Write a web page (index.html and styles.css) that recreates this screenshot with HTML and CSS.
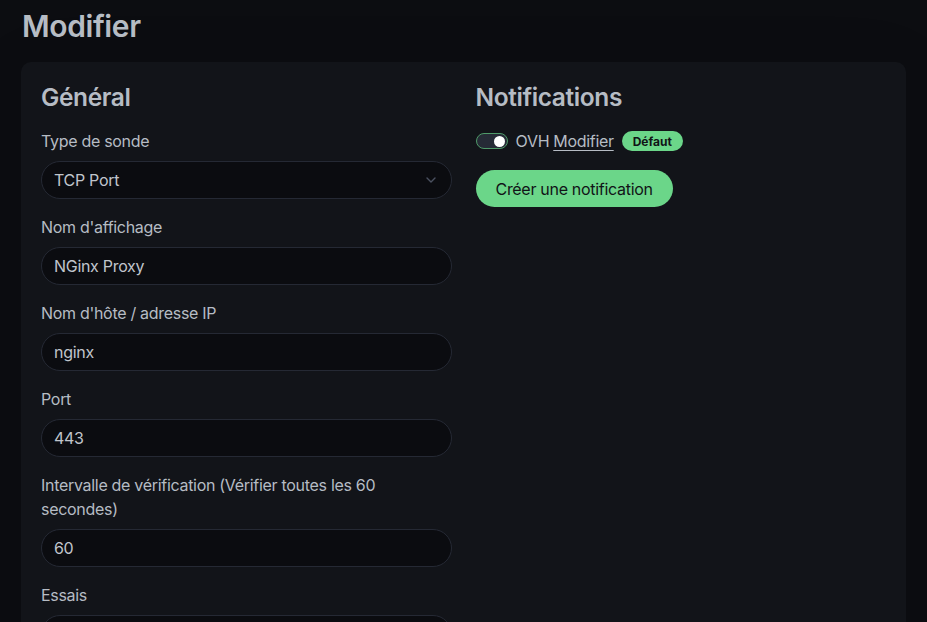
FILE: index.html
```html
<!DOCTYPE html>
<html lang="fr">
<head>
<meta charset="utf-8">
<title>Modifier</title>
<link rel="stylesheet" href="styles.css">
</head>
<body>
<main class="page">
  <h1 class="page-title">Modifier</h1>
  <section class="card">
    <div class="columns">
      <div class="col">
        <h2 class="section-title">Général</h2>
        <div class="field">
          <label class="label">Type de sonde</label>
          <div class="control select">
            <span>TCP Port</span>
            <svg class="chevron" width="10" height="6" viewBox="0 0 10 6"><path d="M1 1l4 4 4-4" fill="none" stroke="#4b5160" stroke-width="1.4" stroke-linecap="round" stroke-linejoin="round"/></svg>
          </div>
        </div>
        <div class="field">
          <label class="label">Nom d'affichage</label>
          <div class="control">NGinx Proxy</div>
        </div>
        <div class="field">
          <label class="label">Nom d'hôte / adresse IP</label>
          <div class="control">nginx</div>
        </div>
        <div class="field">
          <label class="label">Port</label>
          <div class="control">443</div>
        </div>
        <div class="field">
          <label class="label">Intervalle de vérification (Vérifier toutes les 60 secondes)</label>
          <div class="control">60</div>
        </div>
        <div class="field">
          <label class="label">Essais</label>
          <div class="control"></div>
        </div>
      </div>
      <div class="col">
        <h2 class="section-title">Notifications</h2>
        <div class="notif-row">
          <span class="switch"><span class="knob"></span></span>
          <span class="notif-name">OVH</span>
          <a class="notif-edit" href="#">Modifier</a>
          <span class="badge">Défaut</span>
        </div>
        <button class="btn">Créer une notification</button>
      </div>
    </div>
  </section>
</main>
</body>
</html>
```
FILE: styles.css
```css
* { box-sizing: border-box; }
html, body { margin: 0; height: 100%; }
body {
  background: #0c0d11;
  color: #b6bcc4;
  font-family: Inter, "Noto Sans", "Liberation Sans", sans-serif;
  font-size: 16px;
  letter-spacing: -0.3px;
  overflow: hidden;
}
.page {
  padding: 6px 21px 0 21px;
}
.page-title {
  margin: 0 0 16px 1px;
  font-size: 30px;
  line-height: 40px;
  font-weight: 600;
  color: #b6bcc4;
  letter-spacing: -0.4px;
}
.card {
  background: #121419;
  border-radius: 10px;
  padding: 20px 20px 40px 20px;
  min-height: 700px;
  box-shadow: 0 15px 70px rgba(0,0,0,0.1);
}
.columns {
  display: grid;
  grid-template-columns: 1fr 1fr;
  column-gap: 24px;
}
.section-title {
  margin: 0;
  font-size: 24.5px;
  line-height: 31px;
  font-weight: 600;
  color: #b6bcc4;
  letter-spacing: -0.4px;
}
.field {
  margin-top: 16px;
  display: flex;
  flex-direction: column;
}
.label {
  font-size: 16px;
  line-height: 24px;
  margin-bottom: 8px;
}
.control {
  height: 38px;
  border: 1px solid #252934;
  border-radius: 19px;
  background: #0b0c10;
  padding: 0 12px;
  display: flex;
  align-items: center;
  font-size: 16px;
  color: #c0c5cc;
}
.select { justify-content: space-between; padding-right: 15px; }
.notif-row {
  margin-top: 16px;
  height: 24px;
  display: flex;
  align-items: center;
  font-size: 16px;
}
.switch {
  width: 32px;
  height: 16px;
  border: 1px solid #4f9a69;
  border-radius: 8px;
  background: #262b36;
  display: flex;
  align-items: center;
  justify-content: flex-end;
  padding: 0 2px;
  margin-right: 8px;
}
.knob {
  width: 11px;
  height: 11px;
  border-radius: 50%;
  background: #ffffff;
}
.notif-name { margin-right: 4px; }
.notif-edit {
  color: #b6bcc4;
  text-decoration: underline;
  text-underline-offset: 3px;
  margin-right: 8px;
}
.badge {
  background: #6bd689;
  color: #111317;
  font-size: 12px;
  font-weight: 700;
  letter-spacing: 0;
  border-radius: 10px;
  height: 20px;
  padding: 0 11px;
  display: inline-flex;
  align-items: center;
}
.btn {
  margin-top: 17px;
  background: #6bd689;
  color: #111317;
  border: none;
  border-radius: 19px;
  height: 37px;
  padding: 0 20px;
  font-family: inherit;
  font-size: 16px;
  letter-spacing: -0.3px;
}
```
